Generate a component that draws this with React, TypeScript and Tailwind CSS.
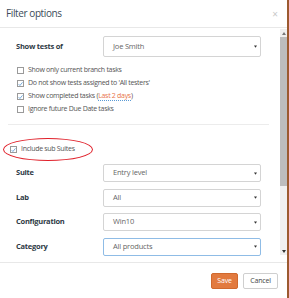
import React from "react";

function Check({ checked }: { checked?: boolean }) {
  return (
    <span className="w-[7px] h-[7px] border border-[#9a9a9a] bg-white flex items-center justify-center shrink-0">
      {checked && (
        <svg width="6" height="6" viewBox="0 0 6 6">
          <path d="M0.8 3.2 L2.3 4.8 L5.4 1" stroke="#5b9bd5" strokeWidth="1" fill="none" />
        </svg>
      )}
    </span>
  );
}

function Select({ value, focus }: { value: string; focus?: boolean }) {
  return (
    <div
      className={
        "w-[158px] h-full flex items-center justify-between pl-[9px] pr-[3px] rounded-[2px] bg-white border " +
        (focus ? "border-[#8fbce6]" : "border-[#d4d4d4]")
      }
    >
      <span className="text-[7.5px] tracking-[-0.2px] text-[#666]">{value}</span>
      <svg width="3" height="3" viewBox="0 0 4 3">
        <path d="M0 0 L4 0 L2 3 Z" fill="#333" />
      </svg>
    </div>
  );
}

function FieldRow({ label, value, focus, h }: { label: string; value: string; focus?: boolean; h: string }) {
  return (
    <div className={"flex items-center " + h}>
      <div className="w-[103px] shrink-0 pl-[16px] text-[7.5px] tracking-[-0.25px] font-bold text-[#2e3a45]">{label}</div>
      <Select value={value} focus={focus} />
    </div>
  );
}

function CheckRow({ checked, children }: { checked?: boolean; children: React.ReactNode }) {
  return (
    <div className="h-[13px] flex items-center gap-[4px] pl-[17px] text-[7px] tracking-[-0.3px] text-[#555]">
      <Check checked={checked} />
      <span>{children}</span>
    </div>
  );
}

export default function App() {
  return (
    <div className="w-[289px] h-[298px] bg-white border-r-2 border-[#9c5a30] flex flex-col font-['Open_Sans',sans-serif] overflow-hidden">
      <div className="h-[28px] shrink-0 border-b border-[#e8e8e8] flex items-center justify-between pl-[6px] pr-[9px]">
        <span className="text-[10px] tracking-[-0.4px] text-[#3b4b58]">Filter options</span>
        <span className="text-[10px] text-[#c8c8c8] leading-none">×</span>
      </div>
      <div className="h-[234px] shrink-0 flex">
        <div className="flex-1 flex flex-col">
          <div className="mt-[8px]">
            <FieldRow label="Show tests of" value="Joe Smith" h="h-[21px]" />
          </div>
          <div className="mt-[7px] flex flex-col">
            <CheckRow>Show only current branch tasks</CheckRow>
            <CheckRow checked>Do not show tests assigned to 'All testers'</CheckRow>
            <CheckRow checked>
              Show completed tasks (
              <span className="text-[#e8744a] border-b border-dotted border-[#5b9bd5]">Last 2 days</span>)
            </CheckRow>
            <CheckRow>Ignore future Due Date tasks</CheckRow>
          </div>
          <div className="mt-[8px] ml-[8px] mr-[11px] border-t border-[#ececec]" />
          <div className="mt-[13px] ml-[3px] w-[90px] h-[23px] border border-[#e0202a] rounded-[50%] flex items-center gap-[4px] pl-[6px] text-[7px] tracking-[-0.3px] text-[#555]">
            <Check checked />
            <span>Include sub Suites</span>
          </div>
          <div className="mt-[3px] flex flex-col gap-[6.5px]">
            <FieldRow label="Suite" value="Entry level" h="h-[18px]" />
            <FieldRow label="Lab" value="All" h="h-[18px]" />
            <FieldRow label="Configuration" value="Win10" h="h-[18px]" />
            <FieldRow label="Category" value="All products" focus h="h-[18px]" />
          </div>
        </div>
        <div className="w-[7px] mt-[1px] mb-[7px] bg-[#f0f0f0] flex flex-col items-center">
          <div className="h-[8px] flex items-center justify-center">
            <svg width="4" height="3" viewBox="0 0 4 3">
              <path d="M0 3 L4 3 L2 0 Z" fill="#777" />
            </svg>
          </div>
          <div className="w-full h-[149px] bg-[#bdbdbd]" />
          <div className="flex-1" />
          <div className="h-[8px] flex items-center justify-center">
            <svg width="4" height="3" viewBox="0 0 4 3">
              <path d="M0 0 L4 0 L2 3 Z" fill="#333" />
            </svg>
          </div>
        </div>
      </div>
      <div className="flex-1 border-t border-[#e8e8e8] flex justify-end items-start pt-[10px] pr-[9px] gap-[5px]">
        <div className="w-[27px] h-[16px] bg-[#e27a3f] border border-[#d0692e] rounded-[2px] flex items-center justify-center text-[7px] tracking-[-0.2px] text-white">
          Save
        </div>
        <div className="w-[35px] h-[16px] bg-white border border-[#cfcfcf] rounded-[2px] flex items-center justify-center text-[7px] tracking-[-0.2px] text-[#444]">
          Cancel
        </div>
      </div>
    </div>
  );
}
